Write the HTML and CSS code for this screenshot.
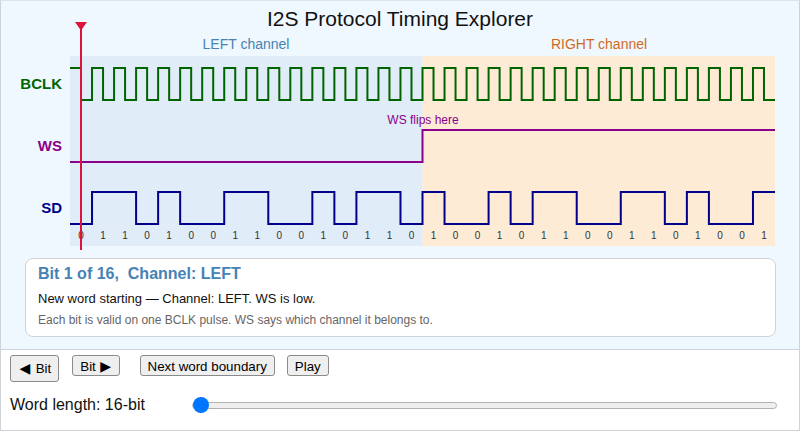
FILE: index.html
```html
<!DOCTYPE html>
<html lang="en">
<head>
<meta charset="utf-8">
<title>I2S Protocol Timing Explorer</title>
<link rel="stylesheet" href="styles.css">
</head>
<body>
<div class="app">
  <section class="viz">
    <svg class="timing" width="798" height="250" viewBox="1 1 798 250" xmlns="http://www.w3.org/2000/svg">
      <text class="title" x="400" y="26">I2S Protocol Timing Explorer</text>
      <rect class="region-left" x="70" y="56" width="352.5" height="190"/>
      <rect class="region-right" x="422.5" y="56" width="352.5" height="190"/>
      <text class="ch-left" x="246" y="49">LEFT channel</text>
      <text class="ch-right" x="599" y="49">RIGHT channel</text>

      <text class="sig-label bclk-label" x="62" y="89">BCLK</text>
      <text class="sig-label ws-label" x="62" y="151">WS</text>
      <text class="sig-label sd-label" x="62" y="213">SD</text>

      <path class="wave bclk" d="M70,68
        h11.015625 v32 h11.015625 v-32 h11.015625 v32 h11.015625 v-32 h11.015625 v32 h11.015625 v-32 h11.015625 v32 h11.015625 v-32
        h11.015625 v32 h11.015625 v-32 h11.015625 v32 h11.015625 v-32 h11.015625 v32 h11.015625 v-32 h11.015625 v32 h11.015625 v-32
        h11.015625 v32 h11.015625 v-32 h11.015625 v32 h11.015625 v-32 h11.015625 v32 h11.015625 v-32 h11.015625 v32 h11.015625 v-32
        h11.015625 v32 h11.015625 v-32 h11.015625 v32 h11.015625 v-32 h11.015625 v32 h11.015625 v-32 h11.015625 v32 h11.015625 v-32
        h11.015625 v32 h11.015625 v-32 h11.015625 v32 h11.015625 v-32 h11.015625 v32 h11.015625 v-32 h11.015625 v32 h11.015625 v-32
        h11.015625 v32 h11.015625 v-32 h11.015625 v32 h11.015625 v-32 h11.015625 v32 h11.015625 v-32 h11.015625 v32 h11.015625 v-32
        h11.015625 v32 h11.015625 v-32 h11.015625 v32 h11.015625 v-32 h11.015625 v32 h11.015625 v-32 h11.015625 v32 h11.015625 v-32
        h11.015625 v32 h11.015625 v-32 h11.015625 v32 h11.015625 v-32 h11.015625 v32 h11.015625 v-32
        h11.015625 v32 h11.015625"/>

      <path class="wave ws" d="M70,162 H422.5 V130 H775"/>
      <text class="ws-note" x="423" y="124">WS flips here</text>

      <path class="wave sd" d="M70,224 h22.03125 V192 h44.0625 V224 h22.03125 V192 h22.03125 V224 h44.0625 V192 h44.0625 V224 h44.0625 V192 h22.03125 V224 h22.03125 V192 h44.0625 V224 h22.03125 V192 h22.03125 V224 h44.0625 V192 h22.03125 V224 h22.03125 V192 h44.0625 V224 h44.0625 V192 h44.0625 V224 h22.03125 V192 h22.03125 V224 h44.0625 V192 h22.03125"/>

      <g class="bits">
        <text x="81.02" y="239">0</text><text x="103.05" y="239">1</text><text x="125.08" y="239">1</text><text x="147.11" y="239">0</text>
        <text x="169.14" y="239">1</text><text x="191.17" y="239">0</text><text x="213.20" y="239">0</text><text x="235.23" y="239">1</text>
        <text x="257.27" y="239">1</text><text x="279.30" y="239">0</text><text x="301.33" y="239">0</text><text x="323.36" y="239">1</text>
        <text x="345.39" y="239">0</text><text x="367.42" y="239">1</text><text x="389.45" y="239">1</text><text x="411.48" y="239">0</text>
        <text x="433.52" y="239">1</text><text x="455.55" y="239">0</text><text x="477.58" y="239">0</text><text x="499.61" y="239">1</text>
        <text x="521.64" y="239">0</text><text x="543.67" y="239">1</text><text x="565.70" y="239">1</text><text x="587.73" y="239">0</text>
        <text x="609.77" y="239">0</text><text x="631.80" y="239">1</text><text x="653.83" y="239">1</text><text x="675.86" y="239">0</text>
        <text x="697.89" y="239">1</text><text x="719.92" y="239">0</text><text x="741.95" y="239">0</text><text x="763.98" y="239">1</text>
      </g>

      <line class="cursor-line" x1="81" y1="28" x2="81" y2="250"/>
      <polygon class="cursor-head" points="75,22 87,22 81,30.5"/>
    </svg>

    <div class="card">
      <div class="card-title">Bit 1 of 16,&nbsp; Channel: LEFT</div>
      <div class="card-text">New word starting — Channel: LEFT. WS is low.</div>
      <div class="card-note">Each bit is valid on one BCLK pulse. WS says which channel it belongs to.</div>
    </div>
  </section>

  <section class="controls">
    <div class="btn-row">
      <div class="btn-group nav-group">
        <button class="btn btn-tall" type="button"><span class="arrow arrow-left">◀</span> Bit</button>
        <button class="btn" type="button">Bit <span class="arrow arrow-right">▶</span></button>
      </div>
      <div class="btn-group action-group">
        <button class="btn" type="button">Next word boundary</button>
        <button class="btn" type="button">Play</button>
      </div>
    </div>
    <div class="length-row">
      <label class="length-label" for="wl">Word length: 16-bit</label>
      <input id="wl" class="length-slider" type="range" min="16" max="32" step="8" value="16">
    </div>
  </section>
</div>
</body>
</html>
```

FILE: styles.css
```css
* { box-sizing: border-box; }

html, body {
  margin: 0;
  padding: 0;
  background: #ffffff;
}

body {
  font-family: "Liberation Sans", Arial, sans-serif;
  color: #000;
}

.app {
  width: 800px;
  height: 431px;
  border: 1px solid #cfd3d8;
  border-top-color: #dde3ea;
  display: flex;
  flex-direction: column;
}

.viz {
  background: #f0f8ff;
  border-bottom: 1px solid #cfd3d8;
  padding-bottom: 12px;
}

.timing {
  display: block;
  font-family: "Liberation Sans", Arial, sans-serif;
}

.title {
  font-size: 21px;
  fill: #111;
  text-anchor: middle;
}

.region-left { fill: #e0ecf8; }
.region-right { fill: #fdebd6; }

.ch-left, .ch-right {
  font-size: 14px;
  text-anchor: middle;
}
.ch-left { fill: #4682b4; }
.ch-right { fill: #d2691e; }

.sig-label {
  font-size: 15px;
  font-weight: bold;
  text-anchor: end;
}
.bclk-label { fill: #006400; }
.ws-label { fill: #8b008b; }
.sd-label { fill: #00008b; }

.wave {
  fill: none;
  stroke-width: 2;
  stroke-linejoin: miter;
}
.bclk { stroke: #006400; }
.ws { stroke: #8b008b; }
.sd { stroke: #00008b; }

.ws-note {
  font-size: 12px;
  fill: #8b008b;
  text-anchor: middle;
}

.bits text {
  font-size: 10px;
  fill: #333;
  text-anchor: middle;
}

.cursor-line {
  stroke: #dc143c;
  stroke-width: 2;
}
.cursor-head { fill: #dc143c; }

.card {
  margin: 7px 23px 0 24px;
  height: 79px;
  background: #ffffff;
  border: 1px solid #cfd3d8;
  border-radius: 8px;
  padding: 5px 12px 8px;
}

.card-title {
  font-size: 16px;
  line-height: 20px;
  font-weight: bold;
  color: #4682b4;
}

.card-text {
  margin-top: 6px;
  font-size: 13px;
  line-height: 18px;
  color: #111;
}

.card-note {
  margin-top: 4px;
  font-size: 12px;
  line-height: 16px;
  color: #666;
}

.controls {
  flex: 1;
  background: #ffffff;
  padding: 5px 0 0 9px;
}

.btn-row {
  display: flex;
  align-items: flex-start;
  gap: 20px;
}

.btn-group {
  display: flex;
  align-items: flex-start;
}
.nav-group { gap: 13px; }
.action-group { gap: 12px; }

.btn {
  font-family: "Liberation Sans", Arial, sans-serif;
  font-size: 13.33px;
  line-height: 15px;
  color: #000;
  background: #efefef;
  border: 1px solid #8a8a8a;
  border-radius: 3px;
  padding: 3px 7px 1px;
  margin: 0;
}

.btn-tall {
  padding-top: 5px;
  padding-bottom: 5px;
}

.arrow {
  display: inline-block;
  font-family: "DejaVu Sans", sans-serif;
  font-size: 14px;
  line-height: 15px;
  text-align: center;
}
.arrow-left { width: 14px; }
.arrow-right { width: 12px; }

.length-row {
  display: flex;
  align-items: center;
  height: 22px;
  margin-top: 12px;
  padding-right: 22px;
}

.length-label {
  width: 182px;
  flex: 0 0 182px;
  font-size: 16px;
  color: #111;
}

.length-slider {
  -webkit-appearance: none;
  appearance: none;
  flex: 1;
  height: 16px;
  margin: 0;
  background: transparent;
}

.length-slider::-webkit-slider-runnable-track {
  height: 7px;
  background: #efefef;
  border: 1px solid #b2b2b2;
  border-radius: 4px;
  box-sizing: border-box;
}

.length-slider::-webkit-slider-thumb {
  -webkit-appearance: none;
  appearance: none;
  width: 16px;
  height: 16px;
  border: none;
  border-radius: 50%;
  background: #0075ff;
  margin-top: -5.5px;
}
```
